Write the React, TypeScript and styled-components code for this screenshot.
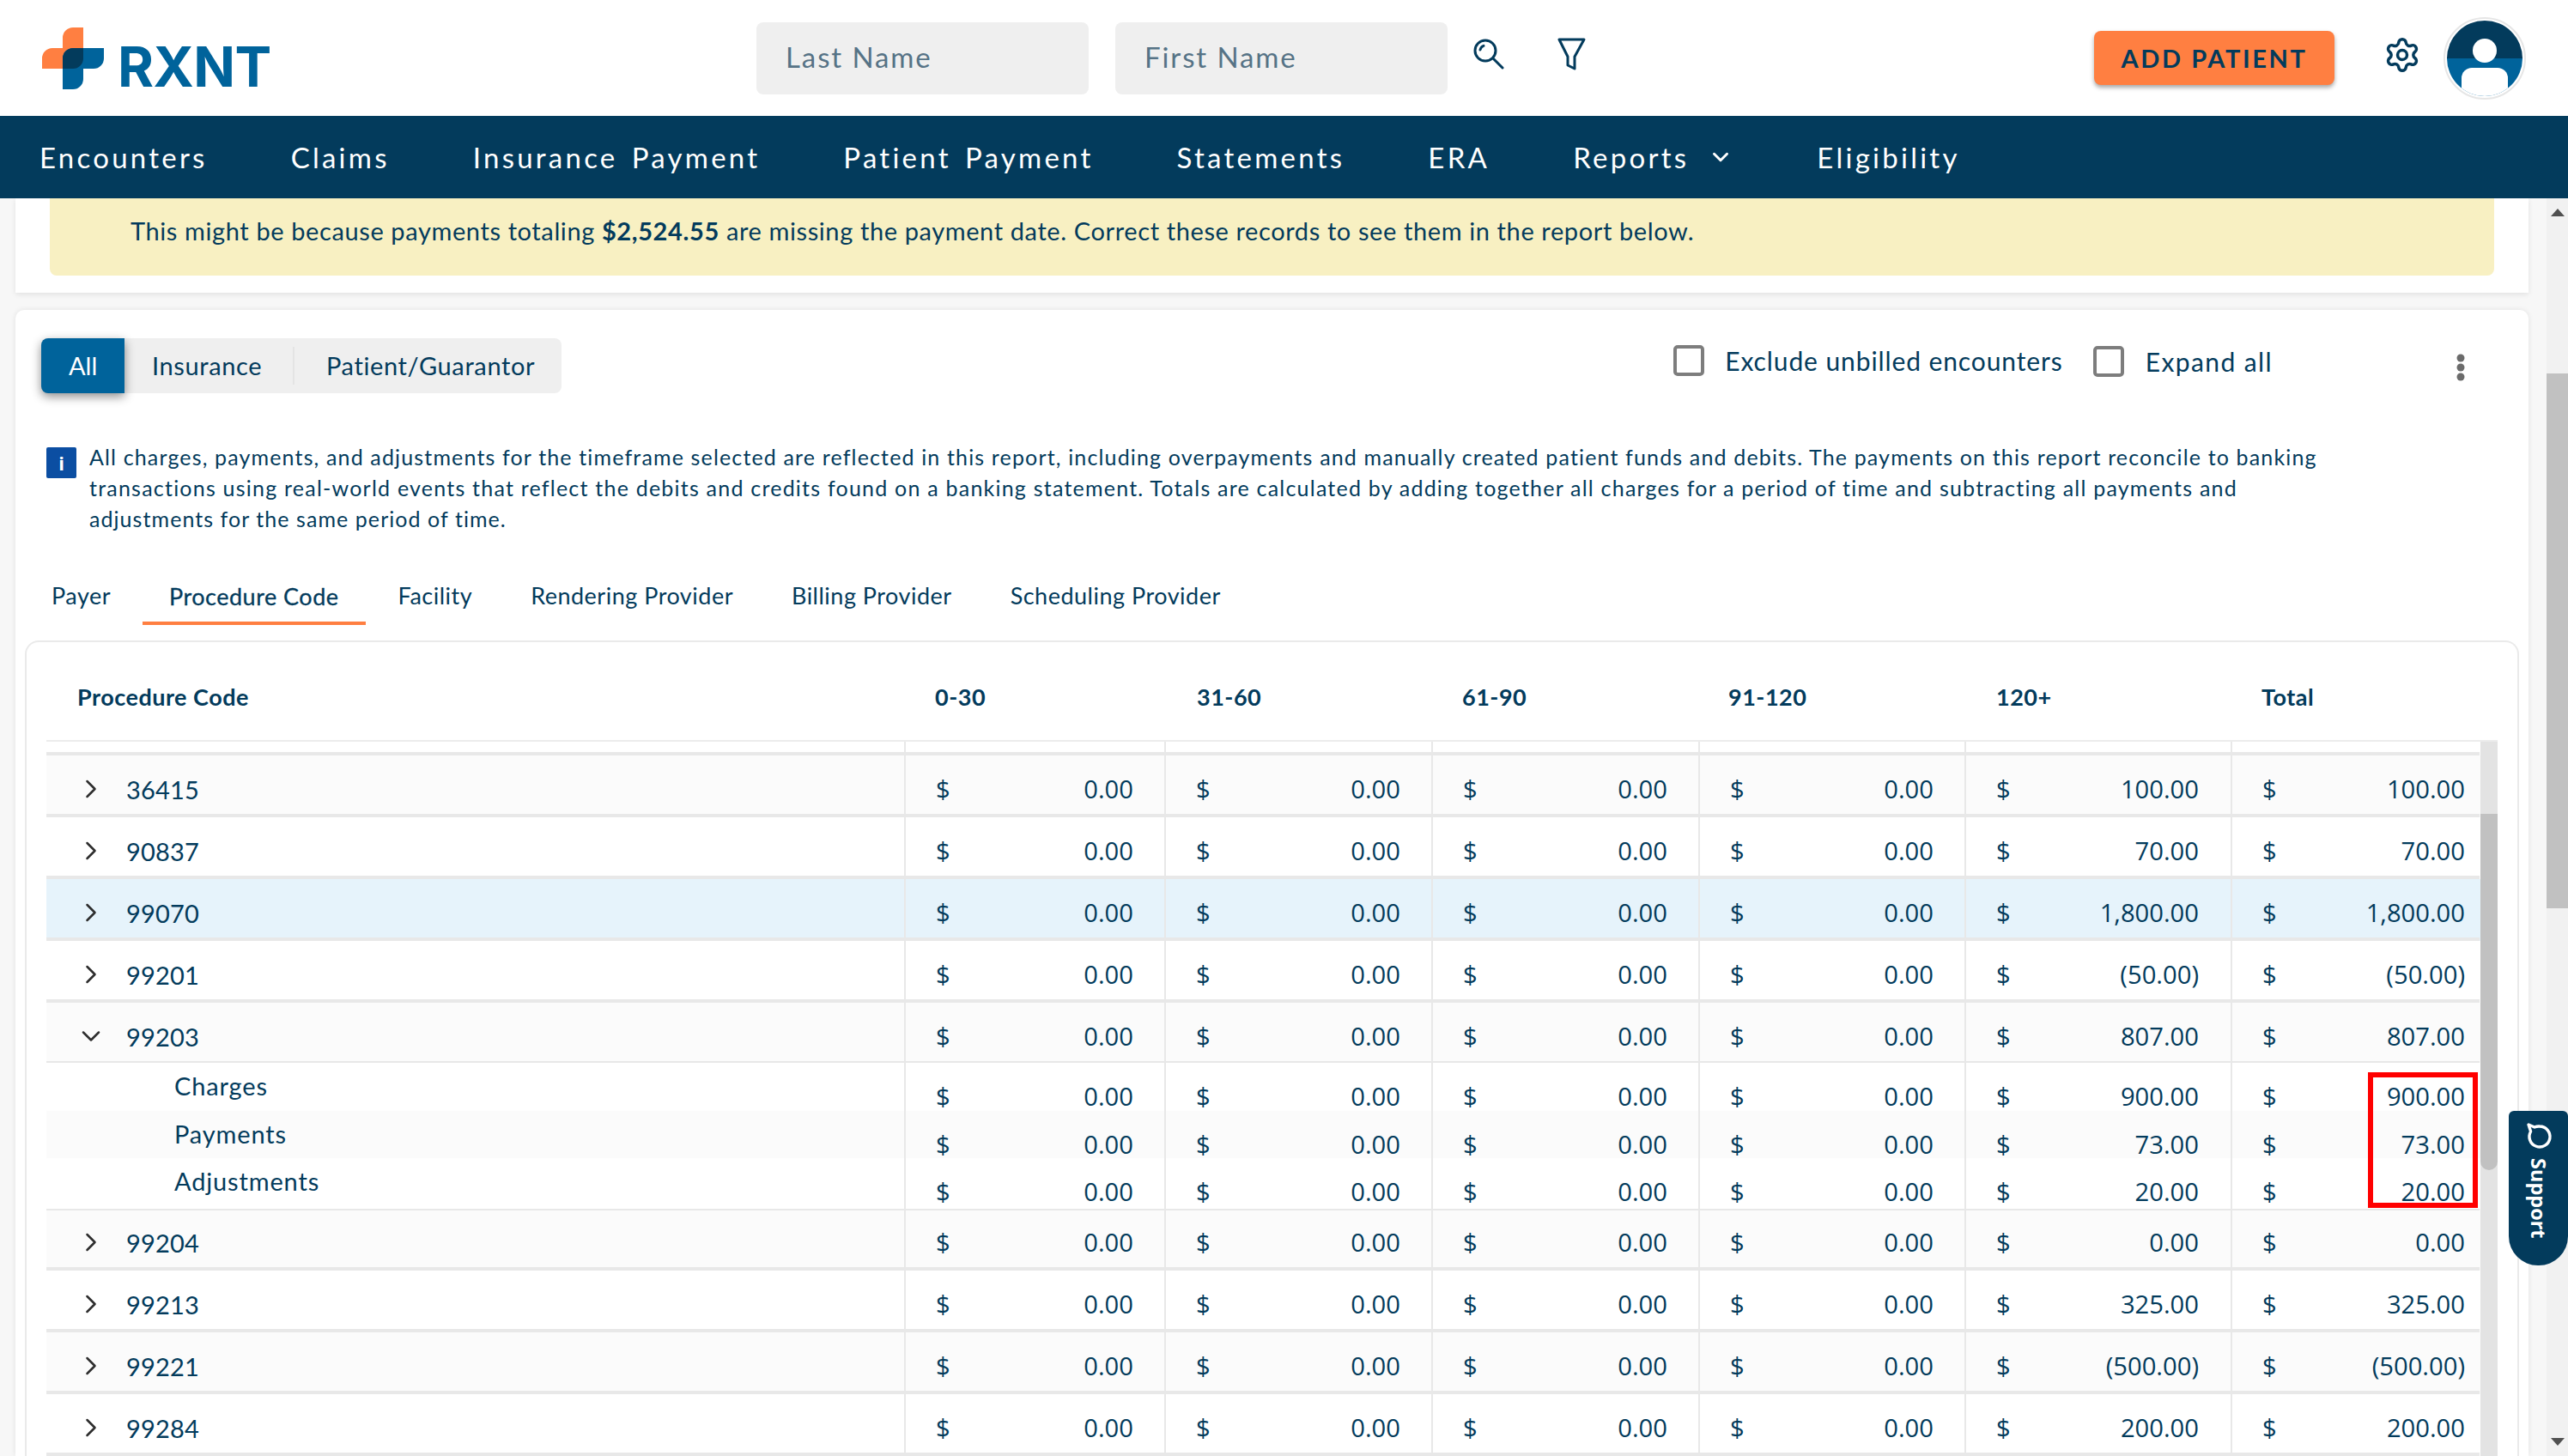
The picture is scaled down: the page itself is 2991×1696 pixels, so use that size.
import React from "react";
import styled, { createGlobalStyle } from "styled-components";
import { ChevronDown, ChevronRight, Settings } from "lucide-react";

const navy = "#033b5c";
const blue = "#00639b";
const orange = "#ff7f41";
const ui = '"Lato", "Noto Sans", sans-serif';
const num = '"Open Sans", "Noto Sans", sans-serif';

const Global = createGlobalStyle`
  html, body { margin: 0; padding: 0; background: #f7f7f7; }
  * { box-sizing: border-box; }
`;

const Root = styled.div`
  width: 2991px;
  height: 1696px;
  overflow: hidden;
  display: flex;
  flex-direction: column;
  font-family: ${ui};
  color: ${navy};
  position: relative;
`;

const Header = styled.header`
  height: 135px;
  flex: none;
  background: #fff;
  display: flex;
  align-items: center;
  padding-left: 49px;
`;
const Logo = styled.div`
  width: 266px;
  height: 72px;
  flex: none;
  display: flex;
  align-items: flex-end;
`;
const LogoMark = styled.svg`
  width: 72px;
  height: 72px;
  flex: none;
`;
const LogoText = styled.span`
  font-family: "Inter", sans-serif;
  font-weight: 700;
  font-size: 64px;
  line-height: 48px;
  height: 48px;
  color: ${blue};
  margin: 0 0 2px 16px;
  letter-spacing: -0.5px;
`;
const SearchForm = styled.div`
  margin-left: 566px;
  display: flex;
  align-items: center;
  gap: 31px;
`;
const NameInput = styled.input`
  width: 387px;
  height: 84px;
  border: 0;
  border-radius: 8px;
  background: #efefef;
  padding: 0 34px 4px;
  font-family: ${ui};
  font-size: 33px;
  letter-spacing: 1.9px;
  color: ${navy};
  &::placeholder { color: #567386; opacity: 1; }
`;
const IconSlot = styled.div`
  display: flex;
  margin-left: ${(p) => p.$ml}px;
  margin-top: -10px;
`;
const RightGroup = styled.div`
  margin-left: auto;
  display: flex;
  align-items: center;
  padding-right: 49px;
`;
const AddButton = styled.button`
  width: 280px;
  height: 63px;
  border: 0;
  border-radius: 8px;
  background: ${orange};
  box-shadow: 0 3px 5px rgba(0, 0, 0, 0.35);
  color: ${navy};
  font-family: ${ui};
  font-weight: 700;
  font-size: 29px;
  letter-spacing: 2.6px;
`;
const GearSlot = styled.div`
  display: flex;
  margin-left: 57px;
  margin-top: -8px;
  color: ${navy};
`;
const Avatar = styled.svg`
  width: 96px;
  height: 96px;
  margin-left: 26px;
`;

const Nav = styled.nav`
  height: 96px;
  flex: none;
  background: ${navy};
  display: flex;
  align-items: center;
  padding: 0 0 1px 46px;
  gap: 97px;
  position: relative;
  z-index: 2;
`;
const NavItem = styled.div`
  color: #fff;
  font-size: 33px;
  letter-spacing: 3.25px;
  word-spacing: 4.5px;
  display: flex;
  align-items: center;
  gap: 22px;
  white-space: nowrap;
`;

const Page = styled.div`
  flex: 1;
  min-height: 0;
  display: flex;
`;
const Content = styled.main`
  flex: 1;
  min-width: 0;
  padding: 0 21px 0 18px;
  display: flex;
  flex-direction: column;
  gap: 20px;
`;
const PageScroll = styled.div`
  width: 25px;
  flex: none;
  background: #f1f1f1;
  display: flex;
  flex-direction: column;
  align-items: center;
`;
const ArrowUp = styled.div`
  margin-top: 12px;
  border-left: 8px solid transparent;
  border-right: 8px solid transparent;
  border-bottom: 9px solid #505050;
`;
const PageThumb = styled.div`
  width: 100%;
  height: 623px;
  margin-top: 183px;
  background: #c1c1c1;
`;
const ArrowDown = styled.div`
  margin-top: auto;
  margin-bottom: 12px;
  border-left: 8px solid transparent;
  border-right: 8px solid transparent;
  border-top: 9px solid #505050;
`;

const BannerCard = styled.section`
  flex: none;
  height: 110px;
  background: #fff;
  padding: 0 40px 20px;
  box-shadow: 0 2px 6px rgba(0, 0, 0, 0.09);
`;
const Banner = styled.div`
  height: 90px;
  background: #f8f0c2;
  border-radius: 0 0 8px 8px;
  padding: 20px 0 0 94px;
  font-size: 29px;
  line-height: 36px;
  white-space: nowrap;
  letter-spacing: 0.61px;
  b { font-weight: 700; }
`;

const ReportCard = styled.section`
  flex: 1;
  min-height: 0;
  background: #fff;
  border-radius: 10px 10px 0 0;
  box-shadow: 0 0 6px rgba(0, 0, 0, 0.09);
  padding-top: 33px;
  display: flex;
  flex-direction: column;
`;
const Toolbar = styled.div`
  display: flex;
  align-items: flex-start;
  padding: 0 73px 0 30px;
`;
const Segments = styled.div`
  display: flex;
  height: 64px;
  width: 606px;
  background: #efefef;
  border-radius: 8px;
`;
const Segment = styled.div`
  height: 64px;
  display: flex;
  align-items: center;
  font-size: 29px;
  padding-bottom: 2px;
  letter-spacing: ${(p) => (p.$active ? 0 : 0.62)}px;
  width: ${(p) => p.$w}px;
  padding-left: ${(p) => p.$pl}px;
  ${(p) =>
    p.$active
      ? `background: ${blue}; color: #fff; border-radius: 8px 0 0 8px; box-shadow: 0 4px 12px rgba(0,0,0,.45);`
      : ""}
`;
const SegDivider = styled.div`
  width: 2px;
  height: 44px;
  margin-top: 10px;
  background: #e4e4e4;
`;
const CheckField = styled.label`
  display: flex;
  align-items: center;
  margin-top: ${(p) => p.$mt}px;
  margin-left: ${(p) => p.$ml};
  gap: ${(p) => p.$gap}px;
  font-size: 30px;
  letter-spacing: ${(p) => p.$ls}px;
  white-space: nowrap;
  line-height: 36px;
`;
const Check = styled.span`
  width: 36px;
  height: 36px;
  flex: none;
  border: 4px solid #7d7d7d;
  border-radius: 5px;
  background: #fff;
`;
const MoreIcon = styled.svg`
  width: 12px;
  height: 32px;
  margin-left: 213px;
  margin-top: 18px;
`;
const InfoBlock = styled.div`
  display: flex;
  margin: 63px 0 0 36px;
  gap: 15px;
`;
const InfoBadge = styled.div`
  width: 35px;
  height: 36px;
  flex: none;
  background: #0b4ea2;
  border-radius: 2px;
  color: #fff;
  display: flex;
  align-items: center;
  justify-content: center;
  font: 700 22px ${num};
`;
const InfoText = styled.div`
  margin-top: -7px;
  font-size: 25px;
  line-height: 36px;
  white-space: nowrap;
`;
const InfoLine = styled.div`
  letter-spacing: ${(p) => p.$ls}px;
`;
const Tabs = styled.div`
  display: flex;
  height: 60px;
  margin: 46px 0 0 8px;
`;
const Tab = styled.div`
  padding: 0 ${(p) => (p.$active ? 31 : 34)}px 10px;
  height: 60px;
  display: flex;
  align-items: center;
  font-size: 27px;
  letter-spacing: 0.5px;
  white-space: nowrap;
  ${(p) =>
    p.$active
      ? `border-bottom: 4px solid ${orange}; padding-bottom: 4px; margin: 0 4px 0 3px; -webkit-text-stroke: 0.3px ${navy};`
      : ""}
`;

const TableCard = styled.div`
  flex: 1;
  min-height: 0;
  margin: 18px 11px 0 11px;
  border: 2px solid #eaeaea;
  border-bottom: 0;
  border-radius: 16px 16px 0 0;
  padding-left: 23px;
  padding-right: 23px;
  display: flex;
  flex-direction: column;
`;
const HeadRow = styled.div`
  flex: none;
  height: 116px;
  display: grid;
  grid-template-columns: 999px 305px 309px 310px 312px 309px 290px;
  align-items: center;
  font-size: 27px;
  font-weight: 700;
  letter-spacing: 0.5px;
  padding-top: 12px;
  padding-right: 20px;
  border-bottom: 2px solid #ececec;
`;
const HeadCell = styled.div`
  padding-left: 36px;
`;
const BodyWrap = styled.div`
  flex: 1;
  min-height: 0;
  display: flex;
`;
const Rows = styled.div`
  flex: 1;
  min-width: 0;
  overflow: hidden;
`;
const TableScroll = styled.div`
  width: 20px;
  flex: none;
  background: #e3e3e3;
`;
const TableThumb = styled.div`
  height: 415px;
  margin-top: 84px;
  background: #c1c1c1;
  border-radius: 0 0 10px 10px;
`;
const Row = styled.div`
  display: grid;
  grid-template-columns: 1001px 303px 311px 311px 310px 310px 288px;
  height: ${(p) => p.$h}px;
  background: ${(p) => p.$bg};
`;
const CodeCell = styled.div`
  display: flex;
  align-items: center;
  padding: ${(p) => (p.$sub ? "0 0 7px 149px" : "10px 0 0 34px")};
  font-size: 29px;
  letter-spacing: ${(p) => (p.$sub ? 0.85 : 0.2)}px;
  border-right: 2px solid #e8e8e8;
  border-bottom: ${(p) => p.$sep}px solid #e8e8e8;
  color: ${navy};
`;
const Expander = styled.span`
  display: flex;
  width: 36px;
  margin-right: 23px;
  color: #2d2d2d;
`;
const AmountCell = styled.div`
  display: flex;
  align-items: center;
  justify-content: space-between;
  padding: ${(p) => p.$pt}px ${(p) => p.$pr}px 0 35px;
  font-family: ${num};
  font-size: 29.2px;
  color: ${navy};
  border-right: ${(p) => (p.$last ? 0 : 2)}px solid #e8e8e8;
  border-bottom: ${(p) => p.$sep}px solid #e8e8e8;
`;
const RedBox = styled.div`
  position: absolute;
  left: 2758px;
  top: 1249px;
  width: 128px;
  height: 158px;
  border: 6px solid #ff0000;
  z-index: 3;
`;
const SupportTab = styled.div`
  position: absolute;
  left: 2922px;
  top: 1294px;
  width: 69px;
  height: 180px;
  background: ${navy};
  border-radius: 6px 6px 34px 34px;
  color: #fff;
  display: flex;
  flex-direction: column;
  align-items: center;
  padding-top: 13px;
  gap: 8px;
  z-index: 3;
`;
const SupportLabel = styled.span`
  writing-mode: vertical-rl;
  font-family: ${num};
  font-weight: 700;
  font-size: 23.5px;
  line-height: 30px;
`;

const zero = "0.00";
type R = { code: string; late: string; bg: string; sep: number; open?: boolean };
const rows: R[] = [
  { code: "36415", late: "100.00", bg: "#fbfbfb", sep: 4 },
  { code: "90837", late: "70.00", bg: "#fff", sep: 4 },
  { code: "99070", late: "1,800.00", bg: "#e6f3fb", sep: 4 },
  { code: "99201", late: "(50.00)", bg: "#fff", sep: 4 },
  { code: "99203", late: "807.00", bg: "#fbfbfb", sep: 2, open: true },
  { code: "99204", late: "0.00", bg: "#fbfbfb", sep: 4 },
  { code: "99213", late: "325.00", bg: "#fff", sep: 4 },
  { code: "99221", late: "(500.00)", bg: "#fbfbfb", sep: 4 },
  { code: "99284", late: "200.00", bg: "#fff", sep: 4 },
];
const subs = [
  { label: "Charges", v: "900.00", h: 56, bg: "#fff", sep: 0 },
  { label: "Payments", v: "73.00", h: 55, bg: "#fbfbfb", sep: 0 },
  { label: "Adjustments", v: "20.00", h: 59, bg: "#fff", sep: 2 },
];
const heads = ["Procedure Code", "0-30", "31-60", "61-90", "91-120", "120+", "Total"];
const rightPad = [36, 36, 36, 36, 37, 17];

function Amounts({ values, pt, sep }: { values: string[]; pt: number; sep: number }) {
  return (
    <>
      {values.map((v, i) => (
        <AmountCell key={i} $pt={pt} $pr={rightPad[i]} $sep={sep} $last={i === 5}>
          {v && <span>$</span>}
          {v && <span>{v}</span>}
        </AmountCell>
      ))}
    </>
  );
}

export default function App() {
  return (
    <Root>
      <Global />
      <Header>
        <Logo>
          <LogoMark viewBox="49 31 72 72">
            <path d="M97 31H85a12 12 0 0 0-12 12v12H61a12 12 0 0 0-12 12v12h48z" fill={orange} />
            <path d="M85 55h36v12a12 12 0 0 1-12 12H97v12a12 12 0 0 1-12 12H73V67a12 12 0 0 1 12-12z" fill={blue} />
            <path d="M85 55h12v12a12 12 0 0 1-12 12H73V67a12 12 0 0 1 12-12z" fill={navy} />
          </LogoMark>
          <LogoText>RXNT</LogoText>
        </Logo>
        <SearchForm>
          <NameInput placeholder="Last Name" readOnly />
          <NameInput placeholder="First Name" readOnly />
        </SearchForm>
        <IconSlot $ml={30}>
          <svg width="36" height="36" viewBox="0 0 36 36" fill="none" stroke={navy} strokeWidth="3">
            <circle cx="14" cy="14" r="12" />
            <path d="M23 23l11 11" strokeLinecap="round" />
            <path d="M8 13c.6-2.4 2-4 4-4.6" strokeLinecap="round" />
          </svg>
        </IconSlot>
        <IconSlot $ml={62}>
          <svg width="33" height="38" viewBox="0 0 33 38" fill="none" stroke={navy} strokeWidth="3" strokeLinejoin="round">
            <path d="M2 2h29L20 22v14l-8-4V22z" />
          </svg>
        </IconSlot>
        <RightGroup>
          <AddButton>ADD PATIENT</AddButton>
          <GearSlot>
            <Settings size={44} strokeWidth={1.9} />
          </GearSlot>
          <Avatar viewBox="0 0 96 96">
            <defs>
              <clipPath id="avatarClip">
                <circle cx="48" cy="48" r="44" />
              </clipPath>
            </defs>
            <circle cx="48" cy="48" r="47" fill="#fff" stroke="#e6e6e6" strokeWidth="2" />
            <g clipPath="url(#avatarClip)">
              <rect width="96" height="48" fill={navy} />
              <rect y="48" width="96" height="48" fill={blue} />
              <path d="M21 96V71a12 12 0 0 1 12-12h30a12 12 0 0 1 12 12v25z" fill="#fff" />
            </g>
            <circle cx="48" cy="39" r="14" fill="#fff" />
          </Avatar>
        </RightGroup>
      </Header>
      <Nav>
        <NavItem>Encounters</NavItem>
        <NavItem>Claims</NavItem>
        <NavItem>Insurance Payment</NavItem>
        <NavItem>Patient Payment</NavItem>
        <NavItem>Statements</NavItem>
        <NavItem>ERA</NavItem>
        <NavItem>
          Reports <ChevronDown size={30} strokeWidth={2.4} />
        </NavItem>
        <NavItem>Eligibility</NavItem>
      </Nav>
      <Page>
        <Content>
          <BannerCard>
            <Banner>
              This might be because payments totaling <b>$2,524.55</b> are missing the payment date. Correct these
              records to see them in the report below.
            </Banner>
          </BannerCard>
          <ReportCard>
            <Toolbar>
              <Segments>
                <Segment $active $w={97} $pl={32}>All</Segment>
                <Segment $w={196} $pl={32}>Insurance</Segment>
                <SegDivider />
                <Segment $w={311} $pl={37}>Patient/Guarantor</Segment>
              </Segments>
              <CheckField $mt={8} $ml="auto" $ls={0.9} $gap={24}>
                <Check />
                Exclude unbilled encounters
              </CheckField>
              <CheckField $mt={9} $ml="35px" $ls={1.4} $gap={25}>
                <Check />
                Expand all
              </CheckField>
              <MoreIcon viewBox="0 0 12 32">
                <circle cx="6" cy="5" r="4.5" fill="#6b6b6b" />
                <circle cx="6" cy="16" r="4.5" fill="#6b6b6b" />
                <circle cx="6" cy="27" r="4.5" fill="#6b6b6b" />
              </MoreIcon>
            </Toolbar>
            <InfoBlock>
              <InfoBadge>i</InfoBadge>
              <InfoText>
                <InfoLine $ls={1.15}>
                  All charges, payments, and adjustments for the timeframe selected are reflected in this report, including overpayments and manually created patient funds and debits. The payments on this report reconcile to banking
                </InfoLine>
                <InfoLine $ls={1.22}>
                  transactions using real-world events that reflect the debits and credits found on a banking statement. Totals are calculated by adding together all charges for a period of time and subtracting all payments and
                </InfoLine>
                <InfoLine $ls={1.06}>adjustments for the same period of time.</InfoLine>
              </InfoText>
            </InfoBlock>
            <Tabs>
              <Tab>Payer</Tab>
              <Tab $active>Procedure Code</Tab>
              <Tab>Facility</Tab>
              <Tab>Rendering Provider</Tab>
              <Tab>Billing Provider</Tab>
              <Tab>Scheduling Provider</Tab>
            </Tabs>
            <TableCard>
              <HeadRow>
                {heads.map((h) => (
                  <HeadCell key={h}>{h}</HeadCell>
                ))}
              </HeadRow>
              <BodyWrap>
                <Rows>
                  <Row $h={16} $bg="#fff">
                    <CodeCell $sep={4} />
                    <Amounts values={["", "", "", "", "", ""]} pt={0} sep={4} />
                  </Row>
                  {rows.map((r) => (
                    <React.Fragment key={r.code}>
                      <Row $h={r.sep === 2 ? 70 : 72} $bg={r.bg}>
                        <CodeCell $sep={r.sep}>
                          <Expander>
                            {r.open ? <ChevronDown size={36} strokeWidth={1.7} /> : <ChevronRight size={36} strokeWidth={1.7} />}
                          </Expander>
                          {r.code}
                        </CodeCell>
                        <Amounts values={[zero, zero, zero, zero, r.late, r.late]} pt={10} sep={r.sep} />
                      </Row>
                      {r.open &&
                        subs.map((s) => (
                          <Row key={s.label} $h={s.h} $bg={s.bg}>
                            <CodeCell $sub $sep={s.sep}>{s.label}</CodeCell>
                            <Amounts values={[zero, zero, zero, zero, s.v, s.v]} pt={19} sep={s.sep} />
                          </Row>
                        ))}
                    </React.Fragment>
                  ))}
                </Rows>
                <TableScroll>
                  <TableThumb />
                </TableScroll>
              </BodyWrap>
            </TableCard>
          </ReportCard>
        </Content>
        <PageScroll>
          <ArrowUp />
          <PageThumb />
          <ArrowDown />
        </PageScroll>
      </Page>
      <RedBox />
      <SupportTab>
        <svg width="36" height="34" viewBox="0 0 36 34" fill="none" stroke="#fff" strokeWidth="3.4" strokeLinecap="round" strokeLinejoin="round" transform="rotate(90)">
          <path d="M6 16a12 12 0 1 1 6 10.4L4 29l3-7a12 12 0 0 1-1-6z" />
        </svg>
        <SupportLabel>Support</SupportLabel>
      </SupportTab>
    </Root>
  );
}
